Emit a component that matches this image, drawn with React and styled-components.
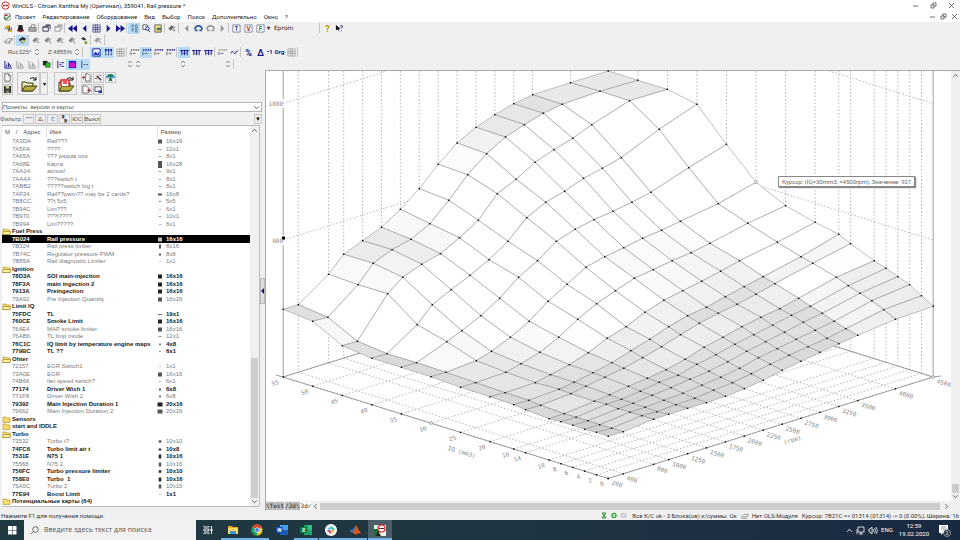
import React from 'react'
import styled, { createGlobalStyle, css } from 'styled-components'

const GlobalStyle = createGlobalStyle`
  * {
    box-sizing: border-box;
  }

  body {
    margin: 0;
    background: #f0f0f0;
    color: #222;
    font-family: Roboto, 'Noto Sans', sans-serif;
    font-size: 6px;
    line-height: 8px;
  }

  button,
  input,
  select {
    font: inherit;
    color: inherit;
    margin: 0;
    padding: 0;
    border: 0;
    background: none;
    border-radius: 0;
  }
`

/* ---------- data ---------- */

const iqAxis = [55, 50, 45, 40, 35, 30, 25, 20, 16, 14, 10, 8, 6, 4, 2, 0]
const rpmAxis = [
  200, 400, 800, 1000, 1250, 1500, 1750, 2000, 2250, 2500, 2750, 3000, 3250,
  3500, 4000, 4500,
]

// projected height of every node, one row per IQ value
const surface = [
  [309.3, 304.7, 274.3, 254.3, 240.7, 227.3, 209.3, 188.7, 164.3, 143, 127.3, 114.7, 103.7, 94.7, 82.7, 71],
  [321.3, 317.3, 284.7, 263.3, 249.7, 239.3, 223.7, 200.3, 174.7, 153.7, 137, 124.7, 113.3, 104.3, 91.3, 80.3],
  [345.7, 341.3, 293.7, 277.3, 264.3, 253.7, 237.7, 220.3, 193.7, 179.3, 162.3, 149.7, 138.3, 124.7, 100.7, 89.3],
  [358.3, 353.7, 324.7, 304.7, 289.7, 275.3, 259.7, 241.3, 217.7, 202.3, 191.3, 178.3, 168.3, 157.7, 129.3, 104.3],
  [367.3, 362.7, 341.7, 330.7, 315.7, 298.3, 277.3, 260.7, 241.3, 229.3, 219.7, 211.3, 202.3, 192.3, 167.7, 144.3],
  [376.7, 372.3, 360.7, 351.3, 337.3, 321.3, 301.3, 284.3, 267.3, 256.7, 247.7, 238.3, 230.3, 221.3, 203.7, 182.3],
  [387.3, 382.7, 372.3, 363.7, 352.3, 337.3, 319.3, 303.7, 290.7, 278.3, 269.7, 260.7, 252.7, 243.3, 223.3, 205.7],
  [396.7, 392.7, 382.7, 374.7, 364.7, 352.7, 338.3, 326.7, 312.3, 300.3, 290.7, 281.3, 271.3, 260.7, 242.3, 222.3],
  [404.7, 400.3, 389.3, 382.3, 372.7, 362.7, 350.7, 339.3, 326.7, 315.7, 307.3, 296.7, 286.7, 276.7, 256.7, 234.3],
  [409.7, 405.3, 393.7, 386.3, 377.3, 368.3, 357.7, 346.7, 334.7, 323.3, 313.3, 304.3, 294.3, 283.7, 263.3, 243.7],
  [418.7, 413.7, 401.3, 394.7, 386.3, 378.3, 369.7, 359.3, 347.3, 337.3, 326.7, 317.3, 308.7, 298.3, 277.3, 260.7],
  [421.7, 417.3, 404.3, 399.3, 391.3, 382.3, 375.3, 364.3, 354.7, 344.3, 334.7, 325.3, 315.3, 306.3, 285.7, 268.3],
  [425.3, 420.7, 408.7, 403.3, 395.3, 387.7, 379.3, 371.3, 361.7, 351.3, 341.7, 332.3, 322.3, 313.3, 293.3, 276.7],
  [429.3, 424.7, 412.3, 407.3, 400.3, 393.3, 385.3, 377.3, 368.3, 357.7, 348.7, 339.3, 330.3, 321.3, 300.7, 284.7],
  [432.3, 428.3, 415.7, 411.7, 404.7, 398.3, 390.3, 382.7, 373.7, 364.3, 355.3, 346.7, 338.3, 328.7, 309.7, 295.7],
  [436.3, 431.7, 419.3, 414.3, 408.3, 402.7, 396.3, 388.7, 380.3, 370.3, 361.3, 352.3, 343.7, 335.3, 319.3, 306.3],
]

// [address, name, size, bold] or { group, closed }
const mapRows = [
  ['7A3DA', 'Rail???', '16x16'],
  ['7A5FA', '????', '12x1'],
  ['7A65A', '??? рядом оси', '8x1'],
  ['7A68E', 'Карта', '16x28'],
  ['7AA24', 'atmosf', '9x1'],
  ['7AA4A', '???switch t', '8x1'],
  ['7ABB2', '?????switch big t', '8x1'],
  ['7AF24', 'Rail??pwm?? may be 2 cards?', '16x8'],
  ['7B8CC', '??t 5x5', '5x5'],
  ['7B94C', 'Lim???', '6x1'],
  ['7B970', '???t????', '10x1'],
  ['7B994', 'Lim?????', '6x1'],
  { group: 'Fuel Press' },
  ['7B024', 'Rail pressure', '16x16', true],
  ['7B324', 'Rail press limiter', '8x16'],
  ['7B74C', 'Regulator pressure PWM', '8x8'],
  ['7B85A', 'Rail diagnostic Limiter', '1x1'],
  { group: 'Ignition' },
  ['78D3A', 'SOI main-injection', '16x16', true],
  ['78F3A', 'main ingection 2', '16x16', true],
  ['7913A', 'Preingection', '16x16', true],
  ['79A92', 'Pre Injection Quantity', '16x16'],
  { group: 'Limit IQ' },
  ['75FDC', 'TL', '19x1', true],
  ['760CE', 'Smoke Limit', '16x16', true],
  ['764E4', 'MAP smoke limiter', '16x16'],
  ['76AB6', 'TL limp mode', '12x1'],
  ['76C1C', 'IQ limit by temperature engine maps', '4x8', true],
  ['779BC', 'TL ??', '6x1', true],
  { group: 'Ohter' },
  ['72157', 'EGR Switch1', '1x1'],
  ['73A0E', 'EGR', '16x16'],
  ['74B66', 'fan speed switch?', '6x1'],
  ['77174', 'Driver Wish 1', '6x8', true],
  ['771F8', 'Driver Wish 2', '6x8'],
  ['79392', 'Main Injection Duration 1', '20x16', true],
  ['79662', 'Main Injection Duration 2', '20x16'],
  { group: 'Sensors', closed: true },
  { group: 'start and IDDLE', closed: true },
  { group: 'Turbo' },
  ['73532', 'Turbo t?', '10x10'],
  ['74FC6', 'Turbo limit air t', '10x8', true],
  ['7531E', 'N75 1', '10x16', true],
  ['75568', 'N75 2', '10x16'],
  ['756FC', 'Turbo pressure limiter', '10x10', true],
  ['758E0', 'Turbo  1', '10x16', true],
  ['75A5C', 'Turbo 2', '10x16'],
  ['77E94', 'Boost Limit', '1x1', true],
  { group: 'Потенциальные карты (64)', closed: true },
]

const menu = [
  'Проект',
  'Редактирование',
  'Оборудование',
  'Вид',
  'Выбор',
  'Поиск',
  'Дополнительно',
  'Окно',
  '?',
]

/* ---------- icons ---------- */

const NAVY = '#10108c'
const GREY = '#999'

const glyphs = {
  tools: (
    <>
      <path d="M1 6l3-3 1 5M6 2v6M8 4v4" stroke="#222" fill="none" />
      <path d="M1 3l4-2 1 2-4 2zM5 7h4v2H5z" fill="#d9b400" />
    </>
  ),
  bell: (
    <>
      <path d="M3 1h4l1 5 1 2H1l1-2z" fill="#222" />
      <rect x="3" y="7" width="4" height="2" fill="#b22" />
    </>
  ),
  printer: (
    <>
      <path d="M3 4l1-3h4L7 4" fill="#fff" stroke="#777" />
      <path d="M1 4h8v4H1z" fill="#aaa" stroke="#777" />
    </>
  ),
  windows: c => (
    <>
      <path d="M1 3h6v5H1zM4 1h5v5" fill="none" stroke={c} />
      <path d="M1 3h6v1H1zM4 1h5v1H4z" fill={c} />
    </>
  ),
  first: <path d="M5 1v8L0 5zM10 1v8L5 5z" fill={NAVY} />,
  prev: c => <path d="M7 1v8L3 5z" fill={c} />,
  next: c => <path d="M3 1v8l4-4z" fill={c} />,
  last: <path d="M0 1v8l5-4zM5 1v8l5-4z" fill={NAVY} />,
  grid: c => (
    <path
      d="M1 1h8v8H1zM1 4h8M1 6h8M4 1v8M6 1v8"
      fill="none"
      stroke={c}
      strokeWidth="0.8"
    />
  ),
  tree: <path d="M2 1h2v2H2zM2 5h2v2H2zM6 1h2v2H6zM6 4h2v2H6zM6 7h2v2H6zM3 8v1" fill="none" stroke="#6689a8" />,
  find: (
    <>
      <path d="M1 1h5v5H1z" fill="#fff" stroke="#555" />
      <circle cx="6" cy="5" r="2" fill="#dff" stroke={NAVY} />
      <path d="M7 7l2 2" stroke="#222" />
    </>
  ),
  note: (
    <>
      <path d="M1 1h7v8H1z" fill="#ffe98a" stroke="#555" />
      <path d="M3 4h5v3H3z" fill="#476" />
    </>
  ),
  project: (
    <>
      <path d="M2 1h7v8H2z" fill="#fff" stroke="#666" strokeWidth="0.8" />
      <path d="M2 2h4v2H2z" fill="#c33" />
      <path d="M1 5l3 3 5-5" stroke="#2a8a4a" fill="none" strokeWidth="1.5" />
    </>
  ),
  pen: c => (
    <>
      <path d="M1 5l3-3 2 1-3 4zM5 6l3-3" fill={c} stroke={c} />
      <circle cx="7" cy="7" r="1" fill={c} />
    </>
  ),
  home: c => (
    <>
      <path d="M1 6a4 4 0 0 1 8 0" fill="none" stroke={c} strokeWidth="2" />
      <path d="M1 6h3v2H1zM6 6h3v2H6z" fill={c} />
    </>
  ),
  flagBlue: letterDoc('#2a4fb0', 'T'),
  flagRed: letterDoc('#b02a2a', 'V'),
  flagGreen: letterDoc('#2a8a3a', 'F'),
  help: letterOnly('#b89b00', '?'),
  pointer: (
    <>
      <path d="M1 1l5 4-2 1 1 3-2-3-2 1z" fill="#111" />
      <path d="M6 2h2v2l-1 1M7 7v1" stroke={NAVY} fill="none" />
    </>
  ),
  eraser: <path d="M1 6l3-3h5L6 6zM1 6v2h5l3-3V3M6 6v2" fill="#fff" stroke="#777" strokeWidth="0.8" />,
  hand: (
    <>
      <path d="M1 4l4-3 4 2-2 2-2-1-3 2z" fill="#222" />
      <path d="M3 6l3 2M6 5l2 1" stroke="#9a8a10" strokeWidth="1.5" />
    </>
  ),
  handGreen: (
    <>
      <path d="M1 3l3-2 3 3-2 1z" fill="#333" />
      <path d="M5 6h3v3H5z" fill="#7a9a3a" />
    </>
  ),
  view3d: (
    <>
      <path d="M1 1h8v8H1z" fill="#fff" stroke={NAVY} />
      <path d="M2 7q2-5 3-2t3-2v5H2z" fill="#2440c8" />
    </>
  ),
  bars: c => (
    <>
      <path d="M1 2h8" stroke={c} strokeWidth="2" strokeDasharray="2 1" />
      <path d="M2 3v6M5 3v6M8 3v6" stroke={c} strokeDasharray="2 1" />
    </>
  ),
  ruler: c => (
    <>
      <path d="M1 2h9" stroke={c} strokeDasharray="1 1" strokeWidth="2" />
      <path d="M1 4v4M3 6h3" stroke="#556" />
    </>
  ),
  stairs: c => (
    <path d="M0 3h10M2 2v6M5 2v6M8 2v6M3 6h1M6 6h1" stroke={c} fill="none" />
  ),
  sine: <path d="M1 6q1-4 3-1t3-1l2-1" stroke={NAVY} fill="none" />,
  percent: letterOnly(NAVY, '%'),
  delta: letterOnly(NAVY, 'Δ'),
  chart: c => (
    <path d="M1 1v8h8M3 8V5M5 8V3M7 8V6M4 3l4 4" stroke={c} fill="none" />
  ),
  layers: (
    <>
      <path d="M1 1h5v5H1z" fill="#222" />
      <path d="M4 3h5v5H4z" fill="#2c2" stroke="#222" strokeWidth="0.6" />
    </>
  ),
  lines: <path d="M2 1v8M4 3h1M6 3h3M4 7h1M6 7h3M4 5h2" stroke={NAVY} fill="none" />,
  magenta: (
    <>
      <path d="M1 1h8v8H1z" fill="#2020d0" />
      <path d="M2 3h6v5H2z" fill="#e010c8" />
    </>
  ),
  dashes: <path d="M2 1v8M4 5h2M7 5h2" stroke="#447" fill="none" />,
  page: <path d="M2 1h4l2 2v6H2zM6 1v2h2" fill="#fff" stroke="#444" strokeWidth="0.8" />,
  save: (
    <>
      <path d="M1 1h8v8H1z" fill="#333" />
      <path d="M3 1h4v3H3z" fill="#cc9" />
      <path d="M3 6h4v3H3z" fill="#786" />
    </>
  ),
  pageIn: (
    <>
      <path d="M4 1h3l2 2v6H4z" fill="#fff" stroke="#444" strokeWidth="0.8" />
      <path d="M0 5h3M2 3v4" stroke="#a22" />
    </>
  ),
  pageOut: (
    <>
      <path d="M1 1h4l2 2v6H1z" fill="#fff" stroke="#444" strokeWidth="0.8" />
      <path d="M6 6h4M8 4v4" stroke="#a22" />
    </>
  ),
  wand: (
    <>
      <path d="M3 3l5 5" stroke="#333" strokeWidth="1.5" />
      <path d="M1 6h3M6 2l2 1" stroke="#a33" />
    </>
  ),
  globe: (
    <>
      <path d="M0 5a5 4 0 0 1 10 0l-3 1V5H3v1z" fill="#3a9ad0" />
      <path d="M2 3q3-3 6 0L5 5zM3 9l1-4h2l1 4" fill="#2a7a3a" />
    </>
  ),
  mail: (
    <>
      <path d="M1 2h7v5H1z" fill="#fff" stroke="#446" />
      <path d="M5 6h4v3H5z" fill="#24a" />
    </>
  ),
}

function letterDoc(color, ch) {
  return (
    <>
      <path d="M1 1h8v8H1z" fill="#fff" stroke="#668" strokeWidth="0.8" />
      <text x="5" y="8" fontSize="7" fontWeight="700" textAnchor="middle" fill={color}>
        {ch}
      </text>
    </>
  )
}

function letterOnly(color, ch) {
  return (
    <text x="5" y="9" fontSize="10" fontWeight="700" textAnchor="middle" fill={color}>
      {ch}
    </text>
  )
}

const Glyph = ({ name, color = '#555', size = 9 }) => {
  const g = glyphs[name]
  return (
    <svg width={size} height={size} viewBox="0 0 10 10" aria-hidden="true">
      {typeof g === 'function' ? g(color) : g}
    </svg>
  )
}

const Folder = ({ closed }) => (
  <svg width="9" height="7" viewBox="0 0 9 7" aria-hidden="true">
    <path d="M1 1h3l1 1h3v4.500H1z" fill="#f7dc6a" stroke="#b79a2c" strokeWidth="0.7" />
    {!closed && <path d="M0 6.500l1.500-3h7L8 6.500z" fill="#fff09a" stroke="#8d7420" strokeWidth="0.6" />}
  </svg>
)

const FolderOpen = ({ red }) => (
  <svg width="18" height="16" viewBox="0 0 18 16" aria-hidden="true">
    <path d="M2 6h4l1 1h6v3M2 6v9h10" fill="#e9e2a0" stroke="#3b3b10" />
    <path d="M2 15l3-5h12l-4 5z" fill="#b5ae3e" stroke="#3b3b10" />
    {red ? (
      <path d="M4 10V4h8v6M7 8V5M9 8V5" fill="#fff" stroke="#e02020" strokeWidth="1.500" />
    ) : null}
    <path d="M10 3q3-3 6 1M16 1v3h-3" fill="none" stroke="#111" />
  </svg>
)

/* ---------- toolbars ---------- */

// [glyph, color, selected]
const rowOne = [
  ['tools'], ['bell'], ['printer'], '|',
  ['windows', '#335'], ['windows', GREY], '|',
  ['first'], ['prev', NAVY], ['grid', '#338'], ['next', NAVY], ['last'], '|',
  ['tree', null, true], ['find'], ['note'], '|',
  ['pen', '#666'], '|',
  ['prev', GREY], ['home', '#2458a8'], ['home', GREY], ['next', GREY], '|',
  ['flagBlue'], ['flagRed'], ['flagGreen'],
]
const rowTwo = [
  ['eraser'], '|', ['hand', null, true], '|',
  ['pen', '#888'], ['pen', '#888'], ['pen', '#888'], ['pen', '#888'], ['handGreen'], '|',
  ['pen', GREY], '|',
]
const rowThree = [
  ['view3d', null, true], ['bars', NAVY, true], ['grid', GREY], '|',
  ['ruler', '#555'], ['ruler', NAVY, true], ['ruler', NAVY], ['ruler', NAVY], '|',
  ['stairs', NAVY, true], ['stairs', NAVY], ['stairs', NAVY], '|',
  ['ruler', '#888'], ['sine'], '|',
  ['percent'], ['delta'],
]
const rowFour = [
  ['chart', NAVY], ['chart', GREY], ['chart', GREY], '|',
  ['layers'], '|',
  ['lines'], ['magenta', null, true], ['dashes', null, true],
]

const ToolItems = ({ items }) =>
  items.map((item, i) =>
    item === '|' ? (
      <Separator key={i} />
    ) : (
      <ToolButton key={i} type="button" aria-label={item[0]} $on={item[2]}>
        <Glyph name={item[0]} color={item[1] || undefined} />
      </ToolButton>
    )
  )

const Spin = () => (
  <Spinner viewBox="0 0 6 8" aria-hidden="true">
    <path d="M1 3l2-2 2 2M1 5l2 2 2-2" fill="none" stroke="#888" />
  </Spinner>
)

const Toolbars = () => (
  <div>
    <ToolRow>
      <ToolItems items={rowOne} />
      <DropTool type="button">▾</DropTool>
      <EpromSelect type="button">Eprom</EpromSelect>
      <Separator />
      <ToolItems items={[['help'], ['pointer']]} />
    </ToolRow>
    <ToolRow>
      <ToolItems items={rowTwo} />
    </ToolRow>
    <ToolRow>
      <Readout>Rot:225°</Readout>
      <Spin />
      <Readout>Z:4855%</Readout>
      <Spin />
      <Separator />
      <ToolGroup>
        <ToolItems items={rowThree} />
      </ToolGroup>
      <TextTool type="button">•1</TextTool>
      <TextTool type="button">Org</TextTool>
      <ToolItems items={[['grid', GREY], '|']} />
    </ToolRow>
    <ToolRow>
      <ToolItems items={rowFour} />
      <SpinGroup $wide>
        <Spin />
        <Spin />
      </SpinGroup>
      <SpinGroup>
        <Spin />
      </SpinGroup>
      <SpinGroup>
        <Spin />
      </SpinGroup>
      <Separator />
    </ToolRow>
  </div>
)

/* ---------- project tree ---------- */

const SizeMark = ({ size, color }) => {
  const [w, h] = size.split('x').map(Number)
  const width = Math.max(w / 4, 1)
  const height = Math.max(h / 4, 0.6)
  return (
    <svg width="6" height="7" viewBox="0 0 6 7" aria-hidden="true">
      <rect x={3 - width / 2} y={3.5 - height / 2} width={width} height={height} fill={color} />
    </svg>
  )
}

const MapTable = () => (
  <Table>
    <thead>
      <tr>
        <th>
          <Sort>
            <span>M</span>
            <span>/</span>
            <span>Адрес</span>
          </Sort>
        </th>
        <th>Имя</th>
        <th>Размер</th>
      </tr>
    </thead>
    <tbody>
      {mapRows.map(row =>
        row.group ? (
          <GroupRow key={row.group}>
            <td colSpan={3}>
              <GroupName>
                <Folder closed={row.closed} />
                {row.group}
              </GroupName>
            </td>
          </GroupRow>
        ) : (
          <MapRow key={row[0]} $bold={row[3]} $selected={row[0] === '7B024'}>
            <td>{row[0]}</td>
            <td>{row[1]}</td>
            <td>
              <SizeCell>
                <SizeMark size={row[2]} color={row[0] === '7B024' ? '#bbb' : row[3] ? '#222' : '#555'} />
                {row[2]}
              </SizeCell>
            </td>
          </MapRow>
        )
      )}
    </tbody>
  </Table>
)

const ProjectPanel = () => (
  <Panel>
    <Actions>
      <SmallStack>
        <SmallButton type="button" aria-label="New"><Glyph name="page" /></SmallButton>
        <SmallButton type="button" aria-label="Save"><Glyph name="save" /></SmallButton>
      </SmallStack>
      <BigButton type="button" aria-label="Open"><FolderOpen /></BigButton>
      <DropButton type="button" aria-label="Recent">▾</DropButton>
      <BigButton type="button" aria-label="Import"><FolderOpen red /></BigButton>
      <SmallGrid>
        {['pageIn', 'wand', 'globe', 'pageOut', 'mail'].map(name => (
          <SmallButton key={name} type="button" aria-label={name}>
            <Glyph name={name} />
          </SmallButton>
        ))}
      </SmallGrid>
    </Actions>
    <SelectBox>
      <ViewSelect aria-label="Проекты, версии и карты">
        <option>Проекты, версии и карты:</option>
      </ViewSelect>
      <Chevron dir="down" />
    </SelectBox>
    <FilterBar>
      <span>Фильтр:</span>
      {['""""', 'Δ,', 'Г,', '▚,', 'ЮС', 'Выкл'].map(label => (
        <FilterButton key={label} type="button">{label}</FilterButton>
      ))}
      <FilterMore type="button" aria-label="More">▼</FilterMore>
    </FilterBar>
    <ListBox>
      <TableWrap>
        <MapTable />
      </TableWrap>
      <Scroll>
        <Chevron dir="up" />
        <Thumb />
        <Chevron dir="down" />
      </Scroll>
    </ListBox>
  </Panel>
)

const paths = {
  up: 'M1 4l2-2 2 2',
  down: 'M1 2l2 2 2-2',
  left: 'M4 1L2 3l2 2',
  right: 'M2 1l2 2-2 2',
}
const Chevron = ({ dir, color = '#555' }) => (
  <svg width="7" height="7" viewBox="0 0 6 6" aria-hidden="true">
    <path d={paths[dir]} fill="none" stroke={color} strokeWidth="0.8" />
  </svg>
)

/* ---------- 3d chart ---------- */

const SLOPE = 0.3123
const offIq = iq => (55 - iq) * 5.91
const offRpm = rpm => (rpm - 200) * 0.0756
const px = (iq, rpm) => 283.2 + offIq(iq) + offRpm(rpm)
const floor = (iq, rpm) => 377 + SLOPE * (offIq(iq) - offRpm(rpm))

const cells = []
for (let i = 0; i < 15; i++) {
  for (let j = 14; j >= 0; j--) {
    const corners = [[i, j], [i, j + 1], [i + 1, j + 1], [i + 1, j]]
    const z = corners.map(([a, b]) => floor(iqAxis[a], rpmAxis[b]) - surface[a][b])
    const range = Math.max(...z) - Math.min(...z)
    const span =
      offIq(iqAxis[i + 1]) - offIq(iqAxis[i]) + offRpm(rpmAxis[j + 1]) - offRpm(rpmAxis[j])
    // small flat cells come out darkest
    const g = Math.min(255, Math.round(193 + 0.55 * span + 1.9 * range))
    cells.push({
      key: `${i}-${j}`,
      fill: `rgb(${g},${g},${g})`,
      points: corners.map(([a, b]) => `${px(iqAxis[a], rpmAxis[b])},${surface[a][b]}`).join(' '),
    })
  }
}

const Chart = () => (
  <ChartSvg viewBox="266 71 685 429" preserveAspectRatio="xMidYMin meet" role="img" aria-label="Rail pressure">
    {/* walls and floor */}
    <g stroke="#a4a4a4" strokeWidth="0.8" strokeDasharray="1.5 2" fill="none">
      {rpmAxis.slice(1).map(r => (
        <path key={r} d={`M${px(55, r)} 71V${floor(55, r)}`} />
      ))}
      {iqAxis.slice(1, -1).map(q => (
        <path key={q} d={`M${px(q, 4500)} 71V${floor(q, 4500)}`} />
      ))}
      {iqAxis.map(q => (
        <path key={q} d={`M${px(q, 200)} ${floor(q, 200)}L${px(q, 4500)} ${floor(q, 4500)}`} />
      ))}
      {rpmAxis.map(r => (
        <path key={r} d={`M${px(55, r)} ${floor(55, r)}L${px(0, r)} ${floor(0, r)}`} />
      ))}
      <path d="M283 103.500L387 71M829 71L933 103.500M283 240L608 138.500L933 240" />
    </g>
    <g stroke="#888" strokeWidth="0.8" fill="none">
      <path d="M283.200 71V99M283.200 108V235M283.200 245V377M933.200 71V377" />
      <path d="M276 375L283 377L608.200 275.500L933 377L941 376" />
      <path d="M283 377L608.200 478.500L933 377" />
    </g>
    {/* surface */}
    <g stroke="#969696" strokeWidth="0.6" strokeLinejoin="round">
      {cells.map(c => (
        <polygon key={c.key} points={c.points} fill={c.fill} />
      ))}
    </g>
    <g fill="#000">
      {surface.map((line, i) =>
        line.map((y, j) => (
          <rect key={`${i}-${j}`} x={px(iqAxis[i], rpmAxis[j]) - 0.7} y={y - 0.7} width="1.400" height="1.400" />
        ))
      )}
      {iqAxis.map(q => (
        <rect key={q} x={px(q, 200) - 0.7} y={floor(q, 200) - 0.7} width="1.400" height="1.400" />
      ))}
      {rpmAxis.map(r => (
        <rect key={r} x={px(0, r) - 0.7} y={floor(0, r) - 0.7} width="1.400" height="1.400" />
      ))}
      <rect x="282" y="236.500" width="3" height="3" />
    </g>
    <g fill="#fff" stroke="#777" strokeWidth="0.6">
      <circle cx="756" cy="182.300" r="1.400" />
      <circle cx="431" cy="423" r="1.400" />
      <circle cx="933" cy="377" r="1.400" />
    </g>
    {/* labels */}
    <AxisText>
      <text x="283" y="106" textAnchor="end">1800</text>
      <text x="283" y="243" textAnchor="end">900</text>
      {iqAxis.map(q => (
        <text key={q} textAnchor="end" transform={`translate(${px(q, 200) - 4} ${floor(q, 200) + 7}) rotate(-17)`}>
          {q}
        </text>
      ))}
      {rpmAxis.map(r => (
        <text key={r} transform={`translate(${px(0, r) + 3} ${floor(0, r) + 6}) rotate(17)`}>
          {r}
        </text>
      ))}
      <text textAnchor="middle" transform="translate(461 454) rotate(17)">IQ (mm3)</text>
      <text textAnchor="middle" transform="translate(793 442) rotate(-17)">(rpm)</text>
    </AxisText>
  </ChartSvg>
)

const ChartPane = () => (
  <Pane>
    <Canvas>
      <Chart />
      <Tooltip role="tooltip">Курсор: (IQ=30mm3, =4500rpm), Значение: 921</Tooltip>
      <Scroll>
        <Chevron dir="up" />
        <PaneThumb />
        <Chevron dir="down" />
      </Scroll>
    </Canvas>
    <TabRow>
      <Tab type="button">\Text</Tab>
      <Tab type="button">/2d\</Tab>
      <Tab type="button" $active>3d/</Tab>
      <Chevron dir="left" />
      <HScroll />
      <Chevron dir="right" />
    </TabRow>
  </Pane>
)

/* ---------- taskbar ---------- */

const appIcons = {
  explorer: (
    <>
      <path d="M1 2h4l1 1h5v2H1z" fill="#e8a820" />
      <path d="M1 4h10v6H1z" fill="#ffd766" />
      <path d="M3 7h6v3H3z" fill="#3a96dd" />
    </>
  ),
  chrome: (
    <>
      <circle cx="6" cy="6" r="5.500" fill="#f2c81e" />
      <path d="M6 6L1.200 3.300A5.500 5.500 0 0 1 10.800 3.300z" fill="#db4437" />
      <path d="M6 6L1.200 3.300A5.500 5.500 0 0 0 6 11.500z" fill="#0f9d58" />
      <circle cx="6" cy="6" r="2.600" fill="#fff" />
      <circle cx="6" cy="6" r="2" fill="#4285f4" />
    </>
  ),
  word: (
    <>
      <path d="M4 1h8v10H4z" fill="#41a5ee" />
      <path d="M4 6h8v5H4z" fill="#1a5dbe" />
      <path d="M0 3h7v6H0z" fill="#1850a8" />
      <text x="3.500" y="8" fontSize="5" fontWeight="700" fill="#fff" textAnchor="middle">W</text>
    </>
  ),
  excel: (
    <>
      <path d="M4 1h8v10H4z" fill="#21a366" />
      <path d="M8 1h4v5H8z" fill="#33c481" />
      <path d="M0 3h7v6H0z" fill="#107c41" />
      <text x="3.500" y="8" fontSize="5" fontWeight="700" fill="#fff" textAnchor="middle">X</text>
    </>
  ),
  slack: (
    <>
      <circle cx="6" cy="6" r="6" fill="#fff" />
      <g strokeWidth="1.500" strokeLinecap="round">
        <path d="M5 3v2M3 5h2" stroke="#36c5f0" />
        <path d="M7 3v2M9 5H7.500" stroke="#2eb67d" />
        <path d="M7 9V7M9 7H7.500" stroke="#ecb22e" />
        <path d="M5 9V7M3 7h2" stroke="#e01e5a" />
      </g>
    </>
  ),
  matlab: (
    <>
      <path d="M0 7l4-2 3-4-2 8z" fill="#2a7fc0" />
      <path d="M7 1q1 1 5 9-3-2-5 1L3 8q3-1 4-7z" fill="#e0561c" />
    </>
  ),
  winols: (
    <>
      <path d="M0 1h12v11H0z" fill="#e8f0e8" />
      <path d="M0 5h5v7H0z" fill="#1c6a3a" />
      <path d="M2 12l2-5 3 5z" fill="#222" />
      <circle cx="7.500" cy="4.500" r="3.500" fill="#fff" stroke="#d82020" strokeWidth="1.200" />
      <path d="M5 4.500h5" stroke="#333" />
    </>
  ),
}

const Taskbar = () => (
  <TaskbarRow>
    <StartButton type="button" aria-label="Пуск">
      <svg width="10" height="10" viewBox="0 0 10 10" aria-hidden="true">
        <path d="M1 1h4v4H1zM5.500 1h4v4h-4zM1 5.500h4v4H1zM5.500 5.500h4v4h-4z" fill="#fff" />
      </svg>
    </StartButton>
    <SearchBox>
      <svg width="9" height="9" viewBox="0 0 9 9" aria-hidden="true">
        <circle cx="5.500" cy="3.500" r="2.800" fill="none" stroke="#444" strokeWidth="0.8" />
        <path d="M3.500 5.500L1 8" stroke="#444" strokeWidth="0.8" />
      </svg>
      <SearchInput aria-label="Поиск" placeholder="Введите здесь текст для поиска" />
    </SearchBox>
    <AppButton type="button" aria-label="Представление задач">
      <svg width="10" height="10" viewBox="0 0 10 10" aria-hidden="true">
        <path d="M1 1v1h5V1M1 9V8h5v1M1 4h5v2H1zM8.500 1v8M8 4h1v2H8z" fill="none" stroke="#eee" />
      </svg>
    </AppButton>
    {Object.keys(appIcons).map(name => (
      <AppButton
        key={name}
        type="button"
        aria-label={name}
        $open={name !== 'word'}
        $active={name === 'winols'}
      >
        <svg width="12" height="12" viewBox="0 0 12 12" aria-hidden="true">
          {appIcons[name]}
        </svg>
      </AppButton>
    ))}
    <Tray>
      <Chevron dir="up" color="#fff" />
      <svg width="9" height="9" viewBox="0 0 9 9" aria-hidden="true">
        <path d="M2 1h6v5H2zM3 8h4M5 6v2M1 3v5" fill="none" stroke="#fff" strokeWidth="0.8" />
      </svg>
      <svg width="10" height="9" viewBox="0 0 10 9" aria-hidden="true">
        <path d="M1 3h1l2-2v7L2 6H1zM5 3q1 1.500 0 3M6.500 2q2 2.500 0 5M8 1q3 3.500 0 7" fill="none" stroke="#fff" strokeWidth="0.8" />
      </svg>
      <span>ENG</span>
      <Clock>
        <span>12:59</span>
        <span>19.02.2020</span>
      </Clock>
      <svg width="13" height="13" viewBox="0 0 13 13" aria-hidden="true">
        <path d="M1 1h9v8H5l-2 2V9H1z" fill="#fff" />
        <path d="M3 3h5M3 5h5" stroke="#456" strokeWidth="0.6" />
        <circle cx="9" cy="9" r="3.500" fill="#203040" stroke="#ccc" strokeWidth="0.6" />
        <text x="9" y="11" fontSize="5" fill="#fff" textAnchor="middle">2</text>
      </svg>
    </Tray>
  </TaskbarRow>
)

const WindowButtons = ({ small }) => (
  <WinButtons $small={small}>
    {['M1 4h5', 'M1 3h3v3H1zM3 3V1h3v3H4', 'M1 1l5 5M6 1L1 6'].map(d => (
      <button key={d} type="button" aria-label="window">
        <svg width="7" height="7" viewBox="0 0 7 7" aria-hidden="true">
          <path d={d} fill="none" stroke="#333" strokeWidth="0.7" />
        </svg>
      </button>
    ))}
  </WinButtons>
)

const App = () => (
  <>
    <GlobalStyle />
    <Window>
      <TitleBar>
        <svg width="9" height="9" viewBox="0 0 9 9" aria-hidden="true">
          <circle cx="4.500" cy="4.500" r="3.700" fill="#fff" stroke="#d33" />
          <path d="M2 4.500h5M3 3.500v2M6 3.500v2" stroke="#a44" />
        </svg>
        <span>WinOLS - Citroen Xanthia My (Оригинал), 359041, Rail pressure *</span>
        <WindowButtons />
      </TitleBar>
      <MenuBar>
        <Glyph name="project" size={8} />
        {menu.map(label => (
          <button key={label} type="button">{label}</button>
        ))}
        <WindowButtons small />
      </MenuBar>
      <Toolbars />
      <Workspace>
        <ProjectPanel />
        <Splitter>
          <SplitHandle type="button" aria-label="Collapse" />
        </Splitter>
        <ChartPane />
      </Workspace>
      <StatusBar>
        <StatusHint>Нажмите F1 для получения помощи.</StatusHint>
        <svg width="28" height="7" viewBox="0 0 28 7" aria-hidden="true">
          <path d="M2 1h4L2 6h4zM2 1l4 5" stroke="#3a9a3a" fill="#bfe6bf" />
          <circle cx="14" cy="3.500" r="2" fill="#dfd" stroke="#3aa83a" strokeWidth="1.400" />
          <ellipse cx="23.500" cy="3.500" rx="2.500" ry="1.800" fill="none" stroke="#aaa" />
        </svg>
        <span>Все К/С ok - 3 Блока(ов) к/суммы: Ок</span>
        <StatusModule>
          <Glyph name="eraser" size={8} />
          <span>Нет OLS-Модуля</span>
        </StatusModule>
        <span>Курсор: 7B21C =&gt; 01314 (01314) -&gt; 0 (0.00%), Ширина: 16</span>
      </StatusBar>
      <Taskbar />
    </Window>
  </>
)

/* ---------- styles ---------- */

const Window = styled.div`
  display: flex;
  flex-direction: column;
  height: 100vh;
  overflow: hidden;
  white-space: nowrap;

  svg {
    flex: none;
    display: block;
    overflow: visible;
  }
`

const TitleBar = styled.header`
  display: flex;
  align-items: center;
  gap: 2px;
  height: 11px;
  padding-left: 1px;
  background: #fff;
`

const MenuBar = styled.nav`
  display: flex;
  align-items: center;
  gap: 7px;
  height: 11px;
  padding-left: 3px;
  background: #fff;

  svg + button {
    margin-left: -3px;
  }
`

const WinButtons = styled.div`
  display: flex;
  gap: ${({ $small }) => ($small ? 4 : 11)}px;
  margin-left: auto;
  padding-right: ${({ $small }) => ($small ? 2 : 5)}px;
`

const ToolRow = styled.div`
  display: flex;
  align-items: center;
  height: 12px;
  padding-left: 2px;
`

const ToolGroup = styled.div`
  display: flex;
  align-items: center;
  margin-left: 6px;
`

const ToolButton = styled.button`
  display: flex;
  align-items: center;
  justify-content: center;
  width: 12px;
  height: 11px;
  background: ${({ $on }) => ($on ? '#b9dcf6' : 'transparent')};
`

const Separator = styled.span`
  width: 1px;
  height: 10px;
  margin-right: 1px;
  background: #c4c4c4;
`

const TextTool = styled.button`
  height: 11px;
  padding: 0 1px;
  color: ${NAVY};
  font-weight: 700;
`

const DropTool = styled(TextTool)`
  color: #333;
`

const EpromSelect = styled.button`
  width: 48px;
  padding-left: 3px;
  text-align: left;
  font-family: 'DejaVu Sans', sans-serif;
  font-size: 6px;
`

const Readout = styled.span`
  width: 32px;
  padding-left: 6px;
  color: #555;
  font-family: 'Liberation Sans', sans-serif;
  font-size: 6px;
`

const Spinner = styled.svg`
  width: 6px;
  height: 8px;
  margin-right: 2px;
`

const SpinGroup = styled.div`
  display: flex;
  justify-content: flex-end;
  width: ${({ $wide }) => ($wide ? 53 : 45)}px;
`

const Workspace = styled.main`
  display: flex;
  flex: 1;
  min-height: 0;
`

const Panel = styled.aside`
  display: flex;
  flex-direction: column;
  flex: 0 0 262px;
  padding: 0 0 4px 2px;
`

const Actions = styled.div`
  display: flex;
  gap: 4px;
  height: 32px;
  padding-top: 2px;
`

const SmallStack = styled.div`
  display: grid;
  gap: 1px;
  align-content: start;
`

const SmallGrid = styled.div`
  display: grid;
  grid-template-columns: repeat(3, 11px);
  gap: 1px;
  align-content: start;
`

const bevel = css`
  display: flex;
  align-items: center;
  justify-content: center;
  background: #efefef;
  border: 1px solid #c8c8c8;
`

const SmallButton = styled.button`
  ${bevel}
  width: 11px;
  height: 11px;
`

const BigButton = styled.button`
  ${bevel}
  width: 23px;
  height: 23px;
`

const DropButton = styled.button`
  ${bevel}
  width: 8px;
  height: 23px;
  margin-left: -4px;
  margin-right: 2px;
  color: #000;
`

const SelectBox = styled.div`
  display: flex;
  align-items: center;
  height: 10px;
  padding-right: 1px;
  background: #fff;
  border: 1px solid #b5b5b5;
`

const ViewSelect = styled.select`
  flex: 1;
  height: 8px;
  appearance: none;
  color: #555;
  font-family: 'Liberation Sans', sans-serif;
  font-size: 6px;
`

const FilterBar = styled.div`
  display: flex;
  align-items: center;
  gap: 1px;
  height: 13px;
  margin-left: -2px;
  color: #666;
`

const FilterButton = styled.button`
  ${bevel}
  min-width: 11px;
  height: 10px;
  color: #555;
`

const FilterMore = styled(FilterButton)`
  width: 8px;
  min-width: 8px;
  margin-left: auto;
  color: #000;
`

const ListBox = styled.div`
  display: flex;
  flex: 1;
  min-height: 0;
  margin-right: 2px;
  background: #fff;
  border: 1px solid #bdbdbd;
  border-width: 1px 1px 1px 0;
`

const TableWrap = styled.div`
  flex: 1;
  overflow: hidden;
`

const Table = styled.table`
  width: 100%;
  border-collapse: collapse;
  table-layout: fixed;
  font-family: 'Liberation Sans', sans-serif;
  font-size: 6px;
  line-height: 7px;

  th {
    width: 111px;
    height: 12px;
    padding: 0 0 0 3px;
    color: #555;
    font-weight: 400;
    text-align: left;
    border-left: 1px solid #e2e2e2;
  }

  th:first-child {
    width: 44px;
    border-left: 0;
  }

  th:last-child {
    width: auto;
  }

  td {
    height: 7px;
    padding: 0;
    white-space: pre;
  }

  tr:nth-child(even) td {
    height: 8px;
  }
`

const Sort = styled.span`
  display: flex;
  justify-content: space-between;
  padding-right: 5px;
`

const MapRow = styled.tr`
  color: ${({ $selected, $bold }) => ($selected ? '#fff' : $bold ? '#1a1a1a' : '#7a7a7a')};
  background: ${({ $selected }) => ($selected ? '#000' : 'transparent')};
  font-weight: ${({ $bold }) => ($bold ? 700 : 400)};

  td:first-child {
    padding-left: 10px;
  }

  td:nth-child(2) {
    padding-left: 1px;
  }
`

const GroupRow = styled.tr`
  color: #222;
  font-weight: 700;
`

const GroupName = styled.span`
  display: flex;
  align-items: center;
  gap: 1px;
`

const SizeCell = styled.span`
  display: flex;
  align-items: center;
  gap: 3px;
`

const Scroll = styled.div`
  display: flex;
  flex-direction: column;
  align-items: center;
  justify-content: flex-end;
  width: 9px;
  padding: 1px 0;
  background: #f0f0f0;

  svg:first-child {
    margin-bottom: auto;
  }
`

const Thumb = styled.div`
  width: 7px;
  height: 37%;
  background: #cdcdcd;
`

const Splitter = styled.div`
  display: flex;
  align-items: center;
  justify-content: flex-end;
  width: 3px;
`

const SplitHandle = styled.button`
  flex: none;
  width: 5px;
  height: 26px;
  background: #ddd;
  border: 1px solid #bbb;

  &::after {
    content: '';
    display: block;
    border: 3px solid transparent;
    border-left: 0;
    border-right-color: ${NAVY};
  }
`

const Pane = styled.section`
  display: flex;
  flex-direction: column;
  flex: 1;
  min-width: 0;
  border-left: 1px solid #aaa;
`

const Canvas = styled.div`
  position: relative;
  display: flex;
  flex: 1;
  min-height: 0;
  background: #fff;
  border-top: 1px solid #aaa;
`

const ChartSvg = styled.svg`
  && {
    flex: 1 1 0;
    min-width: 0;
    height: 100%;
  }
`

const AxisText = styled.g`
  fill: #8a8a8a;
  font-family: 'DejaVu Sans Mono', monospace;
  font-size: 6px;
`

const Tooltip = styled.div`
  position: absolute;
  top: 105px;
  left: 512px;
  height: 11px;
  padding: 0 3px;
  background: #fff;
  border: 1px solid #888;
  box-shadow: 1px 1px 1px #888;
  color: #666;
  line-height: 9px;
`

const PaneThumb = styled(Thumb)`
  height: 9px;
`

const TabRow = styled.div`
  display: flex;
  align-items: center;
  gap: 1px;
  height: 10px;
  padding-right: 10px;
`

const Tab = styled.button`
  height: 8px;
  background: ${({ $active }) => ($active ? '#fff' : '#bbb')};
  color: #222;
  font-family: 'DejaVu Sans Mono', monospace;
  font-size: 6px;
  line-height: 8px;
`

const HScroll = styled.div`
  flex: 1;
  height: 7px;
  margin-right: 2px;
  background: #cdcdcd;
`

const StatusBar = styled.footer`
  display: flex;
  align-items: center;
  gap: 4px;
  height: 9px;
  padding: 0 1px;
  color: #333;
`

const StatusHint = styled.span`
  margin-right: auto;
`

const StatusModule = styled.span`
  display: flex;
  align-items: center;
  gap: 3px;
`

const TaskbarRow = styled.footer`
  display: flex;
  align-items: stretch;
  height: 20px;
  background: linear-gradient(90deg, #1f3940, #203642 50%, #1a2942);
  color: #fff;
`

const StartButton = styled.button`
  display: flex;
  align-items: center;
  justify-content: center;
  width: 24px;
`

const SearchBox = styled.label`
  display: flex;
  align-items: center;
  gap: 5px;
  width: 172px;
  padding-left: 6px;
  background: #f2f2f2;
`

const SearchInput = styled.input`
  flex: 1;
  min-width: 0;
  color: #444;
  font-family: 'Open Sans', sans-serif;
  font-size: 7px;

  &::placeholder {
    color: #555;
  }
`

const AppButton = styled.button`
  display: flex;
  align-items: center;
  justify-content: center;
  width: 24px;
  border-top: 2px solid transparent;
  border-bottom: 2px solid ${({ $open }) => ($open ? '#6fb4e8' : 'transparent')};
  background: ${({ $active }) => ($active ? '#4c5f69' : 'transparent')};

  &:nth-child(odd) {
    margin-right: 1px;
  }
`

const Tray = styled.div`
  display: flex;
  align-items: center;
  gap: 3px;
  margin-left: auto;
  padding-right: 9px;
`

const Clock = styled.time`
  display: flex;
  flex-direction: column;
  align-items: center;
  margin: 0 6px 0 3px;
`

export default App
